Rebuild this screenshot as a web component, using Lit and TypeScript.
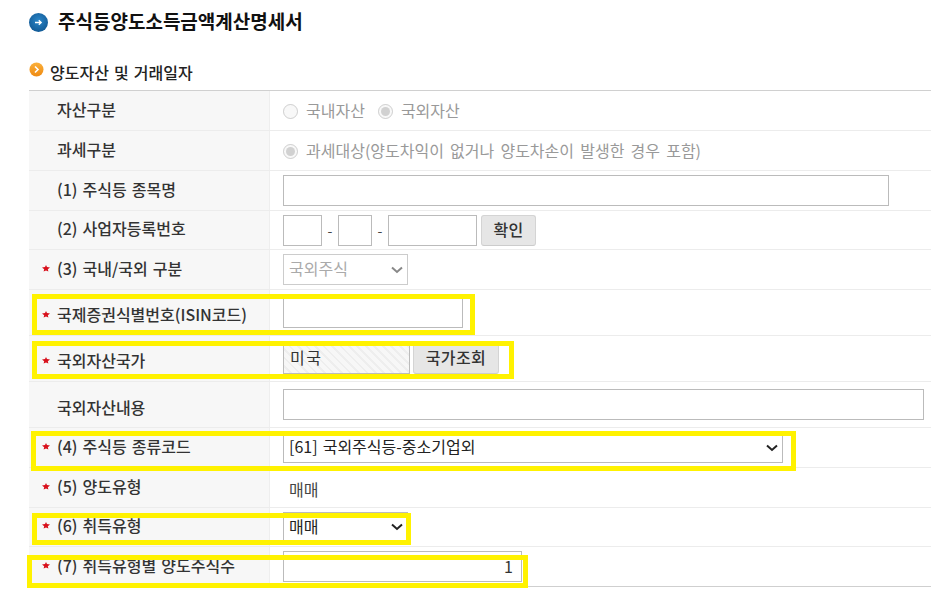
import { LitElement, html, css } from "lit";
import { customElement } from "lit/decorators.js";

const star = html`<svg class="star" viewBox="0 0 8 7" width="8" height="7"><polygon points="4,0 5,2 8,2.6 5.8,4.2 6.4,6.6 4,5.4 1.6,6.6 2.2,4.2 0,2.6 3,2" fill="#d8101c"/></svg>`;

@customElement("app-root")
export class AppRoot extends LitElement {
  static styles = css`
    :host {
      display: block;
      position: relative;
      width: 931px;
      height: 594px;
      overflow: hidden;
      background: #fff;
      font-family: "Noto Sans CJK KR", "Noto Sans", sans-serif;
      color: #333;
    }
    .page { padding-left: 29px; }
    .title {
      display: flex;
      align-items: center;
      gap: 10px;
      height: 44px;
      margin: 0;
      font-size: 19px;
      font-weight: 700;
      color: #111;
    }
    .title span { padding-bottom: 3px; }
    .section {
      display: flex;
      align-items: center;
      gap: 6px;
      height: 36px;
      padding-top: 10px;
      margin: 0;
      font-size: 16px;
      font-weight: 500;
      color: #222;
      word-spacing: 1.5px;
    }
    .section svg { margin-top: -6px; }
    .table { border-top: 1px solid #d0d0d0; }
    .row {
      display: grid;
      grid-template-columns: 241px 1fr;
      border-bottom: 1px solid #ececec;
      box-sizing: border-box;
      height: 40px;
    }
    .row.h39 { height: 39px; }
    .row.h46 { height: 46px; }
    .row.last { border-bottom-color: #cfcfcf; }
    .label {
      display: flex;
      align-items: center;
      gap: 7px;
      padding: 0 0 4px 28px;
      background: #f7f7f7;
      border-right: 1px solid #eee;
      font-size: 16px;
      font-weight: 500;
      color: #333;
      white-space: nowrap;
      line-height: 1;
      word-spacing: 1.5px;
    }
    .label.req { padding-left: 13px; }
    .h46 .label { padding-top: 2px; padding-bottom: 0; }
    .h46 .label.low { padding-top: 4px; }
    .value {
      display: flex;
      align-items: center;
      padding-left: 13px;
      font-size: 16px;
      color: #444;
      white-space: nowrap;
    }
    .star { flex: none; margin-top: 1px; }
    .dis { color: #999; display: flex; align-items: center; word-spacing: 2.6px; }
    .dis span { padding-bottom: 1px; }
    input[type="radio"] {
      width: 15px;
      height: 15px;
      margin: 2px 8px 0 0;
      flex: none;
    }
    input.gap { margin-left: 13px; }
    input[type="text"], select, .btn {
      box-sizing: border-box;
      height: 31px;
      font-family: inherit;
      font-size: 16px;
      border-radius: 0;
      outline: none;
    }
    input[type="text"] {
      border: 1px solid #bbb;
      background: #fff;
      padding: 0 6px 2px;
      color: #333;
    }
    select {
      appearance: none;
      border: 1px solid #bbb;
      background: #fff no-repeat right 4px center;
      background-image: url("data:image/svg+xml,%3Csvg xmlns='http://www.w3.org/2000/svg' width='12' height='8'%3E%3Cpath d='M1 1.5l5 4.5 5-4.5' fill='none' stroke='%23222' stroke-width='2'/%3E%3C/svg%3E");
      color: #222;
      padding: 0 0 3px 5px;
      word-spacing: 1.5px;
    }
    select:disabled {
      border-color: #ccc;
      color: #aaa;
      opacity: 1;
      background-image: url("data:image/svg+xml,%3Csvg xmlns='http://www.w3.org/2000/svg' width='12' height='8'%3E%3Cpath d='M1 1.5l5 4.5 5-4.5' fill='none' stroke='%23888' stroke-width='2'/%3E%3C/svg%3E");
    }
    .w606 { width: 606px; }
    .w39 { width: 39px; }
    .w34 { width: 34px; }
    .w89 { width: 89px; }
    .w180 { width: 180px; }
    .w127 { width: 127px; }
    .w641 { width: 641px; }
    .w125 { width: 125px; }
    .w500 { width: 500px; }
    .w239 { width: 239px; }
    input.num { text-align: right; padding-right: 8px; }
    .dash { width: 16px; text-align: center; font-size: 14px; color: #444; }
    .btn {
      margin-left: 4px;
      padding: 0 0 3px;
      background: #e6e6e6;
      border: 1px solid #d4d4d4;
      border-bottom-color: #ccc;
      border-radius: 3px;
      font-weight: 500;
      color: #333;
      letter-spacing: 0.4px;
    }
    .b55 { width: 55px; }
    .b86 { margin-left: 3px; width: 86px; }
    input.hatch {
      background: repeating-linear-gradient(45deg, #f7f7f7 0 4px, #eeeeee 4px 6px);
      letter-spacing: 1.5px;
      padding: 0 6px 4px;
    }
    .plain { padding: 3px 0 0 6px; }
    .mark {
      position: absolute;
      box-sizing: border-box;
      border: 5px solid #fff200;
      pointer-events: none;
    }
    .m1 { left: 32px; top: 294px; width: 443px; height: 41px; }
    .m2 { left: 32px; top: 341px; width: 482px; height: 38px; }
    .m3 { left: 31px; top: 431px; width: 765px; height: 40px; }
    .m4 { left: 32px; top: 513px; width: 379px; height: 32px; }
    .m5 { left: 27px; top: 555px; width: 501px; height: 33px; }
  `;

  render() {
    return html`
      <div class="page">
        <h1 class="title">
          <svg width="19" height="19" viewBox="0 0 19 19">
            <defs>
              <radialGradient id="bl" cx="50%" cy="40%" r="60%">
                <stop offset="0" stop-color="#2a86c8" />
                <stop offset="1" stop-color="#125a96" />
              </radialGradient>
            </defs>
            <circle cx="9.5" cy="9.5" r="9.5" fill="url(#bl)" />
            <path d="M6 9.5h6M9.8 7.3l2.4 2.2-2.4 2.2" fill="none" stroke="#fff" stroke-width="1.3" />
          </svg>
          <span>주식등양도소득금액계산명세서</span>
        </h1>
        <h2 class="section">
          <svg width="15" height="15" viewBox="0 0 15 15">
            <defs>
              <linearGradient id="or" x1="0" y1="0" x2="0" y2="1">
                <stop offset="0" stop-color="#fbb03b" />
                <stop offset="1" stop-color="#ee8a12" />
              </linearGradient>
            </defs>
            <circle cx="7.5" cy="7.5" r="7" fill="url(#or)" />
            <path d="M6 4.5l3 3-3 3" fill="none" stroke="#fff" stroke-width="1.6" />
          </svg>
          <span>양도자산 및 거래일자</span>
        </h2>
        <div class="table">
          <div class="row">
            <div class="label">자산구분</div>
            <div class="value dis">
              <input type="radio" name="a" disabled /><span>국내자산</span>
              <input class="gap" type="radio" name="a" disabled checked /><span>국외자산</span>
            </div>
          </div>
          <div class="row">
            <div class="label">과세구분</div>
            <div class="value dis">
              <input type="radio" name="b" disabled checked /><span>과세대상(양도차익이 없거나 양도차손이 발생한 경우 포함)</span>
            </div>
          </div>
          <div class="row">
            <div class="label">(1) 주식등 종목명</div>
            <div class="value"><input class="w606" type="text" /></div>
          </div>
          <div class="row h39">
            <div class="label">(2) 사업자등록번호</div>
            <div class="value">
              <input class="w39" type="text" /><span class="dash">-</span>
              <input class="w34" type="text" /><span class="dash">-</span>
              <input class="w89" type="text" />
              <button class="btn b55">확인</button>
            </div>
          </div>
          <div class="row">
            <div class="label req">${star}(3) 국내/국외 구분</div>
            <div class="value">
              <select class="w125" disabled><option>국외주식</option></select>
            </div>
          </div>
          <div class="row h46">
            <div class="label req">${star}국제증권식별번호(ISIN코드)</div>
            <div class="value"><input class="w180" type="text" /></div>
          </div>
          <div class="row h46">
            <div class="label req">${star}국외자산국가</div>
            <div class="value">
              <input class="w127 hatch" type="text" value="미국" readonly />
              <button class="btn b86">국가조회</button>
            </div>
          </div>
          <div class="row h46">
            <div class="label low">국외자산내용</div>
            <div class="value"><input class="w641" type="text" /></div>
          </div>
          <div class="row">
            <div class="label req">${star}(4) 주식등 종류코드</div>
            <div class="value">
              <select class="w500"><option>[61] 국외주식등-중소기업외</option></select>
            </div>
          </div>
          <div class="row">
            <div class="label req">${star}(5) 양도유형</div>
            <div class="value"><span class="plain">매매</span></div>
          </div>
          <div class="row h39">
            <div class="label req">${star}(6) 취득유형</div>
            <div class="value">
              <select class="w125"><option>매매</option></select>
            </div>
          </div>
          <div class="row last">
            <div class="label req">${star}(7) 취득유형별 양도주식수</div>
            <div class="value"><input class="w239 num" type="text" value="1" /></div>
          </div>
        </div>
      </div>
      <div class="mark m1"></div>
      <div class="mark m2"></div>
      <div class="mark m3"></div>
      <div class="mark m4"></div>
      <div class="mark m5"></div>
    `;
  }
}
